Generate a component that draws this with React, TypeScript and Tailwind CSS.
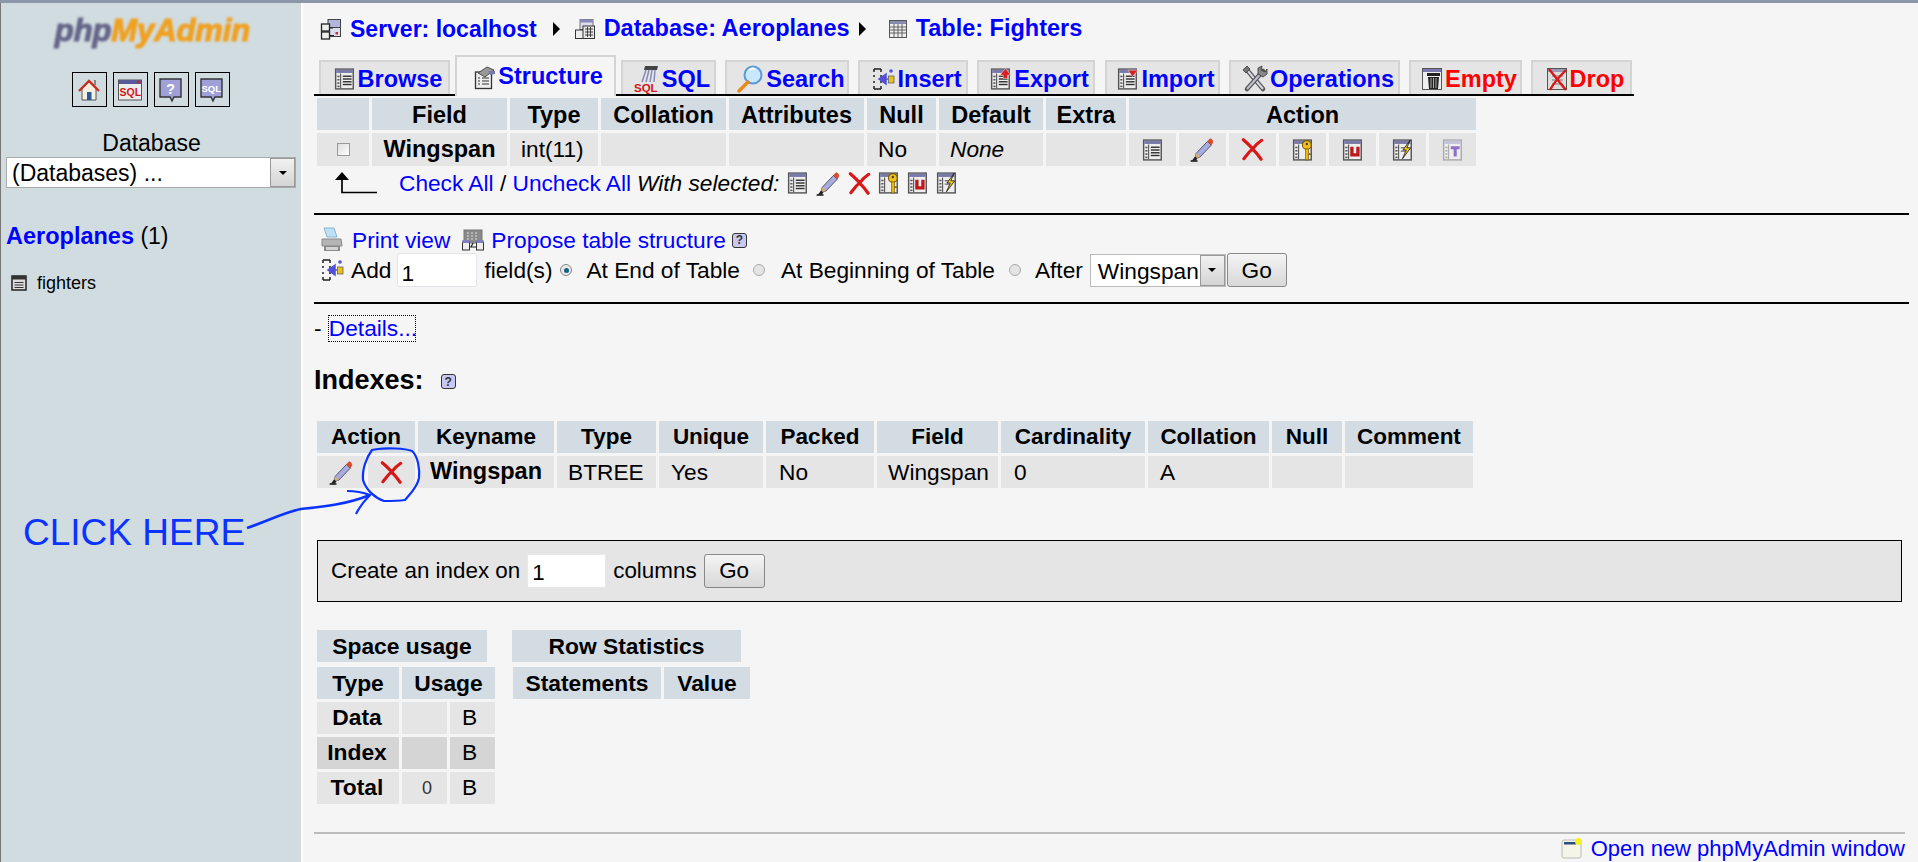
import React from "react";

const font = "font-['Liberation_Sans',Arial,sans-serif]";

type IP = { s?: number; className?: string };

function TableBase({ s = 20, dim = false, children }: { s?: number; dim?: boolean; children?: React.ReactNode }) {
  const e = dim ? "#aaa" : "#555";
  return (
    <svg width={s} height={s} viewBox="0 0 20 20" className="shrink-0 inline-block">
      <rect x="1.500" y="1" width="16" height="18" fill="#eee" stroke={e} strokeWidth="1.300" />
      <rect x="2" y="1.500" width="15" height="3" fill={dim ? "#c4c4dc" : "#7a7aaa"} />
      <rect x="3" y="7" width="2" height="1.400" fill={e} />
      <rect x="3" y="10" width="2" height="1.400" fill={e} />
      <rect x="3" y="13" width="2" height="1.400" fill={e} />
      <rect x="3" y="16" width="2" height="1.400" fill={e} />
      <line x1="6" y1="5" x2="6" y2="18.500" stroke={e} />
      {children}
    </svg>
  );
}
const Lines = () => (
  <g stroke="#333" strokeWidth="1.300">
    <line x1="8" y1="7.500" x2="16" y2="7.500" />
    <line x1="8" y1="10" x2="16" y2="10" />
    <line x1="8" y1="12.500" x2="16" y2="12.500" />
    <line x1="8" y1="15" x2="16" y2="15" />
  </g>
);
const BrowseI = ({ s = 20 }: IP) => <TableBase s={s}><Lines /></TableBase>;
const KeyI = ({ s = 20 }: IP) => (
  <TableBase s={s}>
    <circle cx="13.500" cy="5.500" r="4" fill="#f0c020" stroke="#7a5a00" />
    <rect x="12.300" y="9" width="2.600" height="10" fill="#e8b810" stroke="#7a5a00" strokeWidth=".6" />
    <rect x="15" y="13" width="2" height="1.500" fill="#7a5a00" />
    <circle cx="13.500" cy="4.500" r="1.100" fill="#444" />
  </TableBase>
);
const UniqueI = ({ s = 20 }: IP) => (
  <TableBase s={s}>
    <path d="M9 7v7.500h5.500V7" fill="none" stroke="#c01818" strokeWidth="3" />
  </TableBase>
);
const BoltI = ({ s = 20 }: IP) => (
  <TableBase s={s}>
    <line x1="8" y1="8" x2="12" y2="8" stroke="#555" />
    <line x1="8" y1="11" x2="12" y2="11" stroke="#555" />
    <path d="M16.500 1 10 10h3l-3.500 8 7.500-10h-3.500z" fill="#f2d020" stroke="#222" strokeWidth=".8" />
  </TableBase>
);
const FulltextI = ({ s = 20 }: IP) => (
  <TableBase s={s} dim>
    <path d="M8 8h8M12 8v8" stroke="#8a70c8" strokeWidth="2.800" fill="none" />
  </TableBase>
);
const PencilI = ({ s = 20 }: IP) => (
  <svg width={s} height={s} viewBox="0 0 20 20" className="shrink-0 inline-block">
    <path d="M5 13 14 3.500l3 3L8 16l-4 1z" fill="#a8acdc" stroke="#55557a" strokeWidth=".8" />
    <path d="M14 3.500 15.800 1.500c1-.4 2.800 1.200 2.400 2.700L17 6.500z" fill="#e04a2a" stroke="#b83818" strokeWidth=".4" />
    <path d="M5 13l3 3-4 1z" fill="#d8b070" />
    <path d="M1.500 19 4 15.600l2 1.600-1.500 1.800z" fill="#222" />
    <line x1="0.500" y1="19.200" x2="6" y2="19.200" stroke="#222" strokeWidth="1.300" />
  </svg>
);
const XI = ({ s = 20 }: IP) => (
  <svg width={s} height={s} viewBox="0 0 20 20" className="shrink-0 inline-block">
    <path d="M2 1.500C6 5 9 8 10 9.500 12 7 15 4 18 2M10 9.500C13 12.500 15 15 17.500 18.500M10 9.500C7 12 5 15 2.500 18" fill="none" stroke="#d81818" strokeWidth="2.700" strokeLinecap="round" />
  </svg>
);
const Help = () => (
  <span className="inline-flex items-center justify-center w-[15px] h-[15px] rounded-[3px] border border-[#333] bg-[#c8c8f0] text-[12px] font-bold leading-none text-[#333]">?</span>
);
const DbI = () => (
  <svg width="22" height="22" viewBox="0 0 22 22" className="shrink-0">
    <rect x="6" y="1.500" width="13" height="10" fill="#dde" stroke="#777" />
    <rect x="6" y="1.500" width="13" height="3" fill="#8a8ab8" />
    <rect x="1.500" y="12" width="8" height="8.500" fill="#eee" stroke="#333" />
    <rect x="9" y="8" width="11.500" height="12.500" fill="#e8e8e8" stroke="#333" />
    <path d="M11 11h8M11 14h8M11 17h8M13.500 9v10M16.500 9v10" stroke="#333" strokeWidth=".9" />
  </svg>
);
const ServerI = () => (
  <svg width="22" height="22" viewBox="0 0 22 22" className="shrink-0">
    <rect x="8" y="1.500" width="12.500" height="8" fill="#b4b4dc" stroke="#444" />
    <rect x="8" y="9.500" width="12.500" height="9" fill="#dcdcec" stroke="#444" />
    <rect x="1.500" y="6" width="8" height="7" fill="#eee" stroke="#222" strokeWidth="1.300" />
    <rect x="1.500" y="14" width="8" height="7" fill="#eee" stroke="#222" strokeWidth="1.300" />
    <rect x="15.500" y="14" width="2.500" height="2.500" fill="#d03030" />
    <path d="M9.500 10H13M9.500 17.500H14" stroke="#222" />
  </svg>
);
const GridI = () => (
  <svg width="20" height="20" viewBox="0 0 20 20" className="shrink-0">
    <rect x="1.500" y="1.500" width="17" height="17" fill="#eee" stroke="#555" />
    <rect x="2" y="2" width="16" height="3" fill="#8a8ab0" />
    <path d="M2 8h16M2 11h16M2 14h16M6 5v13M10 5v13M14 5v13" stroke="#555" strokeWidth=".9" />
  </svg>
);
const StructI = () => (
  <svg width="22" height="24" viewBox="0 0 22 24" className="shrink-0">
    <rect x="1.500" y="6" width="16" height="16.500" fill="#eee" stroke="#333" strokeWidth="1.300" />
    <path d="M4 12h2M4 15h2M4 18h2M8 12h7M8 15h7M8 18h7" stroke="#333" />
    <path d="M4 7 13 1l7 3-9 7z" fill="#999" stroke="#333" strokeWidth=".8" />
    <path d="M14 5l7 0v3l-5 1z" fill="#7a7ab0" />
  </svg>
);
const SqlTabI = () => (
  <svg width="26" height="30" viewBox="0 0 26 30" className="shrink-0">
    <path d="M11 2h13l-1 4H10z" fill="#444" />
    <path d="M12 6l-4 12M15 6l-3 12M18 6l-2 12M21 6l-1 12" stroke="#8a8ab8" strokeWidth="1.500" />
    <text x="0" y="28" fontSize="11.500" fontWeight="700" fill="#d01818" fontFamily="Liberation Sans">SQL</text>
  </svg>
);
const SearchI = () => (
  <svg width="28" height="30" viewBox="0 0 28 30" className="shrink-0">
    <circle cx="17" cy="11" r="8.500" fill="#c8e8ff" stroke="#5a98d8" strokeWidth="2" />
    <path d="M12 18 3 27" stroke="#e88a20" strokeWidth="3.500" strokeLinecap="round" />
    <path d="M13 6a6 6 0 0 1 6-1" stroke="#fff" strokeWidth="2" fill="none" />
  </svg>
);
const InsertI = ({ s = 24 }: IP) => (
  <svg width={s} height={s} viewBox="0 0 24 24" className="shrink-0">
    <path d="M2 2h7M2 22h7M2 2v3M9 2v3M2 19v3M9 19v3M2 8v2M9 8v2M2 14v2M9 14v2" stroke="#222" strokeWidth="1.500" fill="none" />
    <path d="M16 12H10M14 7l-7 5 7 5z" fill="#5050d8" stroke="#5050d8" strokeWidth="1.500" />
    <rect x="16.500" y="9" width="5.500" height="7" fill="#e8c020" stroke="#555" strokeWidth=".7" />
    <circle cx="19" cy="4" r="1.800" fill="#5050d8" />
  </svg>
);
const ExportI = () => (
  <TableBase s={22}>
    <Lines />
    <path d="M14 0.500l5 6h-3v3h-4v-3H9z" fill="#d82020" stroke="#fff" strokeWidth=".4" />
  </TableBase>
);
const ImportI = () => (
  <TableBase s={22}>
    <Lines />
    <path d="M14 8l5-6h-9z" fill="#d82020" stroke="#fff" strokeWidth=".4" />
  </TableBase>
);
const OpsI = () => (
  <svg width="26" height="28" viewBox="0 0 26 28" className="shrink-0">
    <path d="M5 5 21 24" stroke="#555" strokeWidth="4.500" strokeLinecap="round" />
    <path d="M5 5 21 24" stroke="#d8d8e8" strokeWidth="2" />
    <path d="M21 6 5 24" stroke="#555" strokeWidth="4.500" strokeLinecap="round" />
    <path d="M21 6 5 24" stroke="#c0c0d0" strokeWidth="2" />
    <path d="M16 3l4-2-1 4 4 2 2-3v5l-4 3-5-3z" fill="#888" stroke="#333" strokeWidth=".8" />
    <path d="M1 5l4-4 3 3-4 4z" fill="#777" stroke="#333" strokeWidth=".8" />
  </svg>
);
const EmptyI = () => (
  <svg width="22" height="24" viewBox="0 0 22 24" className="shrink-0">
    <rect x="1.500" y="1.500" width="19" height="21" fill="#eee" stroke="#555" />
    <rect x="2" y="2" width="18" height="3" fill="#7a7ab0" />
    <rect x="6" y="6" width="13" height="3" fill="#222" />
    <path d="M7 10h11l-1 12H8z" fill="#222" />
    <path d="M10 11v10M12.500 11v10M15 11v10" stroke="#aaa" />
  </svg>
);
const DropI = () => (
  <svg width="22" height="24" viewBox="0 0 22 24" className="shrink-0">
    <rect x="1.500" y="1.500" width="19" height="21" fill="#ddd" stroke="#555" />
    <rect x="2" y="2" width="18" height="3" fill="#9a9ab8" />
    <path d="M6 9h11M6 13h11M6 17h11" stroke="#777" />
    <path d="M3 2c5 6 11 14 17 21M20 3C14 9 8 15 4 23" stroke="#d81818" strokeWidth="2.400" fill="none" />
  </svg>
);
const PrintI = () => (
  <svg width="24" height="26" viewBox="0 0 24 26" className="shrink-0">
    <path d="M4 1h10l3 9H7z" fill="#bfe0f4" stroke="#8ab4d4" />
    <path d="M2 12h19l1 7H2z" fill="#b4b4b4" stroke="#888" />
    <path d="M4 19h16v5H4z" fill="#8a8a8a" />
    <path d="M6 20h12v3H6z" fill="#d4d4d4" />
  </svg>
);
const ProposeI = () => (
  <svg width="24" height="24" viewBox="0 0 24 24" className="shrink-0">
    <rect x="3" y="2" width="18" height="13" fill="#8a8a8a" stroke="#777" />
    <path d="M6 5h2M10 5h2M14 5h2M6 8h2M10 8h2M14 8h2M6 11h2M10 11h2M14 11h2" stroke="#ddd" />
    <rect x="1.500" y="14" width="7" height="8" fill="#eee" stroke="#333" />
    <rect x="15.500" y="14" width="7" height="8" fill="#eee" stroke="#333" />
    <rect x="1.500" y="12" width="7" height="3" fill="#8080c0" />
    <rect x="15.500" y="12" width="7" height="3" fill="#8080c0" />
    <path d="M9 19h6M12 15l-2 4" stroke="#222" strokeWidth="1.200" />
  </svg>
);
const Table16 = () => (
  <svg width="16" height="16" viewBox="0 0 16 16" className="shrink-0">
    <rect x="1" y="1" width="14" height="14" fill="#ddd" stroke="#222" strokeWidth="1.500" />
    <rect x="1" y="1" width="14" height="3.500" fill="#333" />
    <path d="M3.500 7.500h9M3.500 10h9M3.500 12.500h9" stroke="#333" />
  </svg>
);

function NavBtn({ children }: { children: React.ReactNode }) {
  return <div className="w-[35px] h-[35px] border border-black flex items-center justify-center">{children}</div>;
}

function Tab({ label, icon, active, red, w }: { label: string; icon: React.ReactNode; active?: boolean; red?: boolean; w: string }) {
  const textColor = red ? "text-[#ff0000]" : "text-[#0000ff]";
  if (active) {
    return (
      <div className={`${w} h-[41px] -mb-[2px] border-[2px] border-b-0 border-[#d4d4d4] bg-[#f5f5f5] flex items-start justify-center gap-[2px] pt-[6px] pl-[6px] relative z-10`}>
        <span className="mt-[3px] flex">{icon}</span>
        <span className={`${textColor} font-bold leading-[26px] text-[23.500px]`}>{label}</span>
      </div>
    );
  }
  return (
    <div className={`${w} h-[34px] border-[2px] border-b-0 border-[#d4d4d4] bg-[#e5e5e5] flex items-center justify-center gap-[2px] pl-[7px] pt-[2px] overflow-hidden`}>
      {icon}
      <span className={`${textColor} font-bold leading-[26px] text-[23.500px]`}>{label}</span>
    </div>
  );
}

const th = "bg-[#d3dce3] font-bold text-center p-0 pt-[3px] h-[32px] leading-none text-[23.500px]";
const th2 = "bg-[#d3dce3] font-bold text-center p-0 pt-[1px] h-[32px] leading-none text-[22.500px]";
const td = "bg-[#e5e5e5] p-0 leading-none border-t-[3px] border-[#f5f5f5]";

function Crumb({ icon, label, arrow, textCls }: { icon: React.ReactNode; label: string; arrow?: string; textCls: string }) {
  return (
    <div className="flex items-center gap-[8px]">
      {icon}
      <span className={`text-[#0000ff] font-bold ${textCls}`}>{label}</span>
      {arrow && <span className={`w-0 h-0 border-y-[7px] border-y-transparent border-l-[7px] border-l-black ${arrow}`} />}
    </div>
  );
}

const Dropdown = () => (
  <span className="w-[25px] border border-[#999] bg-gradient-to-b from-[#f2f2f2] to-[#d4d4d4] flex items-center justify-center">
    <span className="w-0 h-0 border-x-[4px] border-x-transparent border-t-[4px] border-t-black" />
  </span>
);

export default function App() {
  return (
    <div className={`${font} w-[1918px] h-[862px] overflow-hidden flex flex-col bg-[#f5f5f5] text-[22.700px] text-black relative`}>
      <div className="h-[3px] shrink-0 bg-[#8b97a8]" />
      <div className="flex flex-1 min-h-0">
        {/* sidebar */}
        <aside className="w-[301px] shrink-0 bg-[#d0dce0] border-l border-[#777] flex flex-col items-stretch">
          <div className="h-[52px] mt-[1px] flex items-center justify-center">
            <span className="text-[31px] font-bold italic leading-none tracking-[-0.1px] ml-[3px] blur-[0.8px] [-webkit-text-stroke:1.100px_currentColor] text-[#666688]">
              php<span className="text-[#f0a020]">MyAdmin</span>
            </span>
          </div>
          <div className="flex justify-center gap-[6px] mt-[16px] pr-[1px]">
            <NavBtn>
              <svg width="24" height="24" viewBox="0 0 24 24">
                <path d="M5 11v11h14V11L12 4z" fill="#f4f0e0" stroke="#555" />
                <path d="M2 13 12 3l10 10" fill="none" stroke="#c83020" strokeWidth="2.400" />
                <rect x="10" y="14" width="4.500" height="8" fill="#2a5a9a" />
                <rect x="17" y="2" width="2" height="5" fill="#888" />
              </svg>
            </NavBtn>
            <NavBtn>
              <svg width="26" height="26" viewBox="0 0 26 26">
                <rect x="1.500" y="3" width="23" height="20" fill="#eee" stroke="#555" />
                <rect x="2" y="3" width="22" height="4" fill="#5a5a9a" />
                <rect x="20" y="3.500" width="3" height="3" fill="#d02020" />
                <text x="2.500" y="19" fontSize="10.500" fontWeight="700" fill="#d01818" fontFamily="Liberation Sans">SQL</text>
              </svg>
            </NavBtn>
            <NavBtn>
              <svg width="26" height="26" viewBox="0 0 26 26">
                <path d="M2 2h21v18h-7l-2 4-2-4H2z" fill="#a0a0d8" stroke="#333" strokeWidth="1.400" />
                <text x="8" y="17" fontSize="15" fontWeight="700" fill="#fff" fontFamily="Liberation Sans">?</text>
              </svg>
            </NavBtn>
            <NavBtn>
              <svg width="26" height="26" viewBox="0 0 26 26">
                <path d="M2 2h21v18h-7l-2 4-2-4H2z" fill="#a0a0d8" stroke="#333" strokeWidth="1.400" />
                <text x="2.500" y="15" fontSize="9.500" fontWeight="700" fill="#fff" fontFamily="Liberation Sans">SQL</text>
              </svg>
            </NavBtn>
          </div>
          <div className="text-center leading-[26px] mt-[23px] ml-[1px] text-[23px]">Database</div>
          <div className="mx-[5px] mt-[1px] h-[31px] bg-white border border-[#aaa] flex items-stretch text-[23px]">
            <span className="flex-1 pl-[5px] leading-[30px]">(Databases) ...</span>
            <Dropdown />
          </div>
          <div className="ml-[5px] mt-[34px] leading-[28px] text-[23px]">
            <span className="text-[#0000ff] font-bold text-[23.500px]">Aeroplanes</span> (1)
          </div>
          <div className="ml-[10px] mt-[21px] flex items-center gap-[10px] text-[18px] leading-[24px]">
            <Table16 />
            <span>fighters</span>
          </div>
        </aside>

        {/* main */}
        <main className="flex-1 min-w-0 border-l-[2px] border-[#fff] pl-[11px] pr-[9px] flex flex-col">
          <div className="flex items-center h-[34px] mt-[9px] ml-[6px]">
            <Crumb icon={<ServerI />} label="Server: localhost" arrow="ml-[8px] mr-[14px]" textCls="text-[23px]" />
            <Crumb icon={<DbI />} label="Database: Aeroplanes" arrow="ml-[1px] mr-[22px]" textCls="text-[23.500px]" />
            <Crumb icon={<GridI />} label="Table: Fighters" textCls="text-[23.500px]" />
          </div>

          {/* tabs */}
          <div className="mt-[11px] h-[39px] flex items-end border-b-[2px] border-black w-[1320px] pl-[5px] gap-[5px]">
            <Tab w="w-[131px]" label="Browse" icon={<BrowseI s={22} />} />
            <Tab w="w-[161px]" active label="Structure" icon={<StructI />} />
            <Tab w="w-[95px]" label="SQL" icon={<SqlTabI />} />
            <Tab w="w-[124px] ml-[4px]" label="Search" icon={<SearchI />} />
            <Tab w="w-[110px] ml-[4px]" label="Insert" icon={<InsertI />} />
            <Tab w="w-[118px] ml-[4px]" label="Export" icon={<ExportI />} />
            <Tab w="w-[115px] ml-[5px]" label="Import" icon={<ImportI />} />
            <Tab w="w-[171px] ml-[4px]" label="Operations" icon={<OpsI />} />
            <Tab w="w-[113px] ml-[4px]" red label="Empty" icon={<EmptyI />} />
            <Tab w="w-[101px] ml-[4px]" red label="Drop" icon={<DropI />} />
          </div>

          {/* structure table */}
          <table className="mt-[2px] border-separate border-spacing-x-[3px] border-spacing-y-0 table-fixed w-[1165px]">
            <colgroup>
              <col className="w-[52px]" /><col className="w-[135px]" /><col className="w-[88px]" /><col className="w-[125px]" /><col className="w-[135px]" /><col className="w-[69px]" /><col className="w-[104px]" /><col className="w-[80px]" />
              <col className="w-[47px]" /><col className="w-[47px]" /><col className="w-[47px]" /><col className="w-[47px]" /><col className="w-[47px]" /><col className="w-[47px]" /><col className="w-[47px]" />
            </colgroup>
            <thead>
              <tr>
                <th className={th} />
                <th className={th}>Field</th>
                <th className={th}>Type</th>
                <th className={th}>Collation</th>
                <th className={th}>Attributes</th>
                <th className={th}>Null</th>
                <th className={th}>Default</th>
                <th className={th}>Extra</th>
                <th className={th} colSpan={7}>Action</th>
              </tr>
            </thead>
            <tbody>
              <tr>
                <td className={`${td} h-[36px]`}>
                  <div className="flex justify-center"><span className="w-[13px] h-[13px] border border-[#999] bg-gradient-to-br from-[#ddd] to-white" /></div>
                </td>
                <td className={`${td} font-bold text-center text-[23.500px]`}>Wingspan</td>
                <td className={`${td} pl-[11px]`}>int(11)</td>
                <td className={td} />
                <td className={td} />
                <td className={`${td} pl-[11px]`}>No</td>
                <td className={`${td} pl-[11px] italic`}>None</td>
                <td className={td} />
                {[<BrowseI key="a" s={22} />, <PencilI key="b" s={25} />, <XI key="c" s={23} />, <KeyI key="d" s={22} />, <UniqueI key="e" s={22} />, <BoltI key="f" s={22} />, <FulltextI key="g" s={22} />].map((ic, i) => (
                  <td key={i} className={td}>
                    <div className="flex justify-center items-center">{ic}</div>
                  </td>
                ))}
              </tr>
            </tbody>
          </table>

          {/* check all */}
          <div className="flex items-center h-[34px] ml-[19px]">
            <svg width="46" height="24" viewBox="0 0 46 24" className="shrink-0 mr-[20px]">
              <path d="M9 1 2 9h14z" fill="#000" />
              <path d="M9 7v14.500h35" fill="none" stroke="#000" strokeWidth="1.700" />
            </svg>
            <span className="text-[#0000ff]">Check All</span>
            <span>&nbsp;/&nbsp;</span>
            <span className="text-[#0000ff]">Uncheck All</span>
            <span className="italic ml-[6px]">With selected:</span>
            <div className="flex items-center gap-[7px] ml-[8px]">
              <BrowseI s={22} /><PencilI s={25} /><XI s={23} /><KeyI s={22} /><UniqueI s={22} /><BoltI s={22} />
            </div>
          </div>

          <div className="h-[2px] bg-black mt-[13px] shrink-0" />

          {/* print / add */}
          <div className="flex items-center h-[30px] mt-[10px] ml-[6px]">
            <PrintI />
            <span className="text-[#0000ff] ml-[8px]">Print view</span>
            <span className="ml-[11px]"><ProposeI /></span>
            <span className="text-[#0000ff] ml-[6px]">Propose table structure</span>
            <span className="ml-[6px] flex"><Help /></span>
          </div>
          <div className="flex items-center h-[36px] -mt-[3px] ml-[7px]">
            <InsertI />
            <span className="ml-[6px]">Add</span>
            <span className="ml-[6px] w-[80px] h-[34px] bg-white border border-[#e4e4ec] rounded-[2px] pl-[3px] leading-[38px]">1</span>
            <span className="ml-[7px]">field(s)</span>
            <span className="ml-[8px] w-[12px] h-[12px] rounded-full border border-[#888] bg-[#e8e8e8] flex items-center justify-center"><span className="w-[5px] h-[5px] rounded-full bg-[#15608a]" /></span>
            <span className="ml-[14px]">At End of Table</span>
            <span className="ml-[13px] w-[12px] h-[12px] rounded-full border border-[#aaa] bg-[#e4e4e4]" />
            <span className="ml-[16px]">At Beginning of Table</span>
            <span className="ml-[14px] w-[12px] h-[12px] rounded-full border border-[#aaa] bg-[#e4e4e4]" />
            <span className="ml-[14px]">After</span>
            <span className="ml-[7px] h-[33px] bg-white border border-[#bbb] flex items-stretch">
              <span className="pl-[7px] leading-[32px]">Wingspan</span>
              <span className="ml-[1px] flex"><Dropdown /></span>
            </span>
            <span className="ml-[1px] w-[60px] h-[34px] border border-[#888] rounded-[3px] bg-gradient-to-b from-[#f4f4f4] to-[#d8d8d8] flex items-center justify-center">Go</span>
          </div>

          <div className="h-[2px] bg-black mt-[14px] shrink-0" />

          <div className="mt-[11px] h-[27px] flex items-center">
            <span>-&nbsp;</span>
            <span className="text-[#0000ff] border border-dotted border-black h-[27px] leading-[24px] w-[88px] whitespace-nowrap">Details...</span>
          </div>

          <div className="mt-[23px] h-[30px] flex items-center">
            <span className="font-bold text-[27px] leading-none">Indexes:</span>
            <span className="ml-[17px] mt-[3px] flex"><Help /></span>
          </div>

          {/* index table */}
          <table className="mt-[26px] border-separate border-spacing-x-[3px] border-spacing-y-0 table-fixed w-[1160px]">
            <colgroup>
              <col className="w-[48px]" /><col className="w-[47px]" /><col className="w-[136px]" /><col className="w-[99px]" /><col className="w-[104px]" /><col className="w-[108px]" /><col className="w-[121px]" /><col className="w-[144px]" /><col className="w-[121px]" /><col className="w-[70px]" /><col className="w-[128px]" />
            </colgroup>
            <thead>
              <tr>
                <th className={th2} colSpan={2}>Action</th>
                <th className={th2}>Keyname</th>
                <th className={th2}>Type</th>
                <th className={th2}>Unique</th>
                <th className={th2}>Packed</th>
                <th className={th2}>Field</th>
                <th className={th2}>Cardinality</th>
                <th className={th2}>Collation</th>
                <th className={th2}>Null</th>
                <th className={th2}>Comment</th>
              </tr>
            </thead>
            <tbody>
              <tr>
                <td className={`${td} h-[35px]`}><div className="flex justify-center"><PencilI s={25} /></div></td>
                <td className={td}><div className="flex justify-center"><XI s={23} /></div></td>
                <td className={`${td} font-bold text-center text-[23.500px]`}>Wingspan</td>
                <td className={`${td} pl-[11px]`}>BTREE</td>
                <td className={`${td} pl-[12px]`}>Yes</td>
                <td className={`${td} pl-[13px]`}>No</td>
                <td className={`${td} pl-[11px]`}>Wingspan</td>
                <td className={`${td} pl-[13px]`}>0</td>
                <td className={`${td} pl-[12px]`}>A</td>
                <td className={td} />
                <td className={td} />
              </tr>
            </tbody>
          </table>

          {/* create index */}
          <div className="mt-[52px] ml-[3px] w-[1585px] h-[62px] shrink-0 bg-[#e5e5e5] border border-black flex items-center pl-[13px] text-[22.400px]">
            <span>Create an index on</span>
            <span className="ml-[7px] w-[79px] h-[34px] bg-white border border-[#e8e8e8] pl-[4px] leading-[36px]">1</span>
            <span className="ml-[7px]">columns</span>
            <span className="ml-[7px] w-[61px] h-[34px] border border-[#888] rounded-[3px] bg-gradient-to-b from-[#f4f4f4] to-[#d8d8d8] flex items-center justify-center">Go</span>
          </div>

          {/* stats */}
          <div className="mt-[28px] ml-[3px] flex items-start text-[22.800px]">
            <div className="w-[178px]">
              <div className="w-[170px] h-[32px] bg-[#d3dce3] font-bold flex items-center justify-center">Space usage</div>
              <div className="mt-[5px] flex gap-[3px] h-[32px] font-bold">
                <div className="w-[82px] bg-[#d3dce3] flex items-center justify-center">Type</div>
                <div className="w-[93px] bg-[#d3dce3] flex items-center justify-center">Usage</div>
              </div>
              {[["Data", "", "bg-[#e5e5e5]"], ["Index", "", "bg-[#d5d5d5]"], ["Total", "0", "bg-[#e5e5e5]"]].map(([n, v, bg]) => (
                <div key={n} className="mt-[3px] flex gap-[3px] h-[32px] leading-[30px]">
                  <div className={`w-[82px] ${bg} font-bold flex items-start justify-center pr-[2px]`}>{n}</div>
                  <div className={`w-[45px] ${bg} flex items-center justify-center pl-[5px] text-[18px] text-[#333]`}>{v}</div>
                  <div className={`w-[45px] ${bg} flex items-start justify-center pr-[6px]`}>B</div>
                </div>
              ))}
            </div>
            <div className="ml-[17px]">
              <div className="w-[229px] h-[32px] bg-[#d3dce3] font-bold flex items-center justify-center">Row Statistics</div>
              <div className="mt-[5px] ml-[1px] flex gap-[3px] h-[32px] font-bold">
                <div className="w-[148px] bg-[#d3dce3] flex items-center justify-center">Statements</div>
                <div className="w-[86px] bg-[#d3dce3] flex items-center justify-center">Value</div>
              </div>
            </div>
          </div>

          <div className="flex-1" />
          <div className="h-[2px] bg-[#bbb] shrink-0 mr-[4px]" />
          <div className="h-[28px] flex items-center justify-end gap-[8px] text-[22px] shrink-0 mr-[4px]">
            <svg width="22" height="22" viewBox="0 0 22 22" className="shrink-0">
              <rect x="1" y="3" width="19" height="18" rx="2" fill="#f4f4e8" stroke="#bbb" />
              <rect x="3" y="5" width="12" height="2.500" fill="#2a4a80" />
              <circle cx="17.500" cy="4.500" r="3.500" fill="#f4f020" />
            </svg>
            <span className="text-[#0000ff]">Open new phpMyAdmin window</span>
          </div>
        </main>
      </div>

      {/* hand-drawn annotation over the page */}
      <span className="absolute left-[23px] top-[511px] text-[37px] leading-[44px] text-[#0a33ff] whitespace-nowrap">CLICK HERE</span>
      <svg className="absolute left-0 top-0 pointer-events-none" width="1918" height="862" viewBox="0 0 1918 862" fill="none" stroke="#0a33ff" strokeWidth="2.200">
        <path d="M378 449C385 448 405 448 412 451 418 456 420 470 419 478 417 488 410 494 405 500 398 501 390 501 384 501 375 498 366 490 363 480 362 470 366 458 372 450Z" />
        <path d="M247 528C265 522 285 512 301 509 320 507 345 505 370 495" strokeWidth="2.600" />
        <path d="M347 491C355 491 362 492 370 495 364 501 359 508 356 514" />
      </svg>
    </div>
  );
}
